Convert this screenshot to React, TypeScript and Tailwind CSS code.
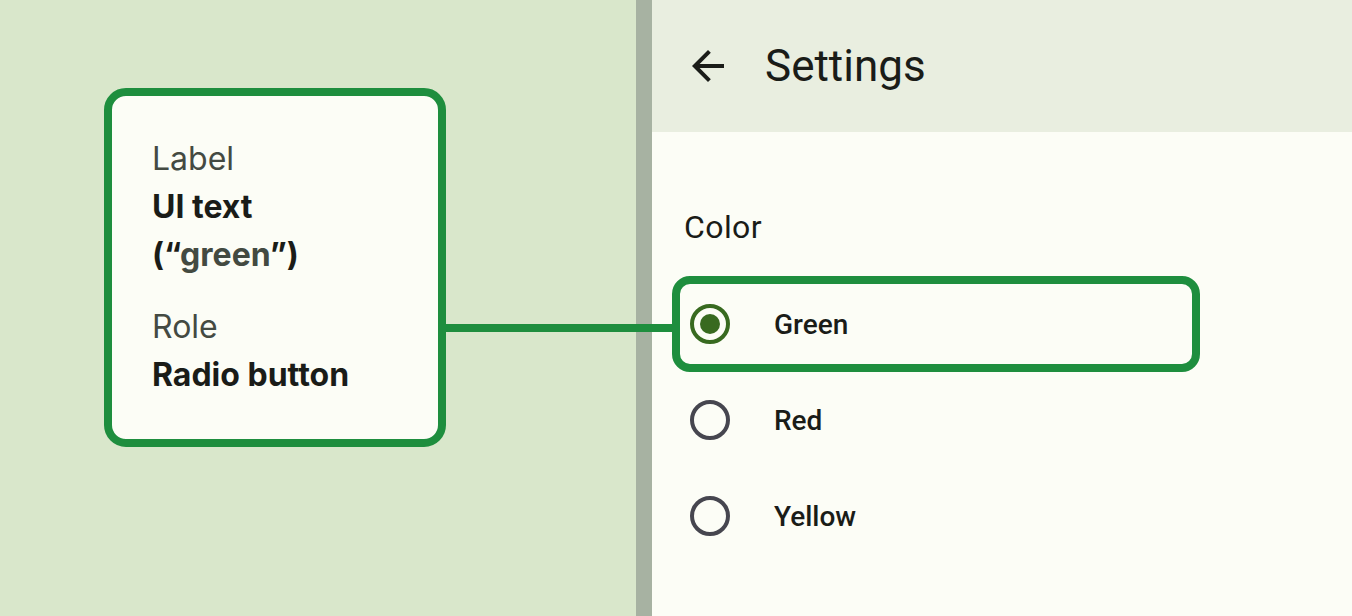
import React from "react";

const options = [
  { label: "Green", selected: true },
  { label: "Red", selected: false },
  { label: "Yellow", selected: false },
];

function Radio({ selected }: { selected: boolean }) {
  return (
    <div
      className={
        "w-10 h-10 rounded-full border-4 flex items-center justify-center shrink-0 " +
        (selected ? "border-[#386a20]" : "border-[#46464f]")
      }
    >
      {selected && <div className="w-5 h-5 rounded-full bg-[#386a20]" />}
    </div>
  );
}

export default function App() {
  return (
    <div className="relative flex w-[1352px] h-[616px] overflow-hidden">
      {/* Annotation side */}
      <div className="w-[636px] h-full bg-[#d9e7cb] pl-[104px] pt-[88px]">
        <div
          className="w-[342px] h-[359px] border-8 border-[#1e8e3e] rounded-[22px] bg-[#fcfdf6] pl-[40px] pt-[39px] text-[32px] leading-[48px]"
          style={{ fontFamily: "Inter, 'Noto Sans', sans-serif" }}
        >
          <div className="text-[#444a42]">Label</div>
          <div className="font-bold text-[#1a1c18]">UI text</div>
          <div className="font-bold text-[#1a1c18]">
            (“<span className="text-[#434a41]">green</span>”)
          </div>
          <div className="mt-6 text-[#444a42]">Role</div>
          <div className="font-bold text-[#1a1c18]">Radio button</div>
        </div>
      </div>

      {/* Divider */}
      <div className="w-4 h-full bg-[#a7b2a2]" />

      {/* Phone screen */}
      <div
        className="flex-1 h-full bg-[#fcfdf6] text-[#1a1c18]"
        style={{ fontFamily: "Roboto, 'Liberation Sans', sans-serif" }}
      >
        <div className="h-[132px] bg-[#e9eee0] flex items-center pl-8">
          <svg width="48" height="48" viewBox="0 0 24 24" fill="#1a1c18">
            <path d="M20 11H7.83l5.59-5.59L12 4l-8 8 8 8 1.41-1.41L7.83 13H20v-2z" />
          </svg>
          <span className="ml-[33px] text-[44px] leading-[52px]">Settings</span>
        </div>

        <div className="pt-[75px]">
          <div className="pl-[32px] text-[32px] leading-[40px] tracking-[0.4px]">Color</div>
          <div className="mt-[29px] ml-5 w-[528px]">
            {options.map((o) => (
              <div
                key={o.label}
                className={
                  "h-24 flex items-center pl-[10px] border-8 rounded-[18px] " +
                  (o.selected ? "border-[#1e8e3e]" : "border-transparent")
                }
              >
                <Radio selected={o.selected} />
                <span className="ml-[44px] pt-[2px] text-[28px] font-medium">{o.label}</span>
              </div>
            ))}
          </div>
        </div>
      </div>

      {/* Connector from annotation card to highlighted row */}
      <div className="absolute left-[446px] top-[324px] w-[226px] h-2 bg-[#1e8e3e]" />
    </div>
  );
}
